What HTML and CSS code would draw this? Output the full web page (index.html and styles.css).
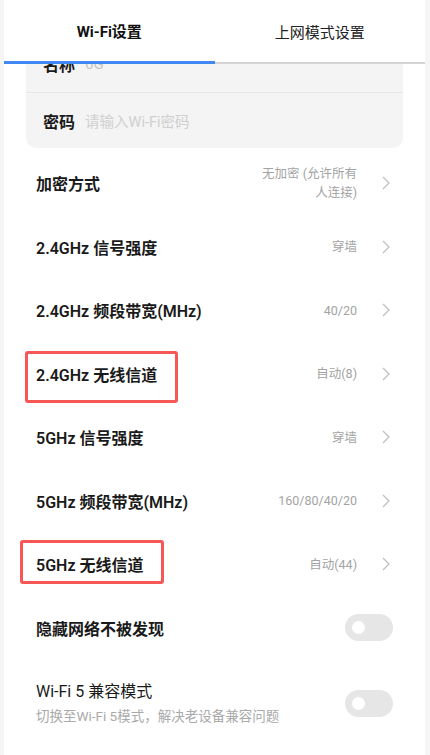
FILE: index.html
```html
<!DOCTYPE html>
<html lang="zh-CN">
<head>
<meta charset="utf-8">
<title>Wi-Fi设置</title>
<link rel="stylesheet" href="styles.css">
</head>
<body>
<div class="panel">
  <div class="tabs">
    <div class="tab active">Wi-Fi设置</div>
    <div class="tab">上网模式设置</div>
  </div>
  <div class="content">
    <div class="card">
      <div class="card-row"><span class="card-label">名称</span><span class="card-value">6G</span></div>
      <div class="card-row"><span class="card-label">密码</span><span class="card-ph">请输入Wi-Fi密码</span></div>
    </div>
    <div class="list">
      <div class="row">
        <span class="label">加密方式</span>
        <span class="value">无加密 (允许所有人连接)</span>
        <svg class="chev" width="8" height="14" viewBox="0 0 8 14"><path d="M1 1 L7 7 L1 13" fill="none" stroke="#bdbdbd" stroke-width="1.2"/></svg>
      </div>
      <div class="row">
        <span class="label">2.4GHz 信号强度</span>
        <span class="value">穿墙</span>
        <svg class="chev" width="8" height="14" viewBox="0 0 8 14"><path d="M1 1 L7 7 L1 13" fill="none" stroke="#bdbdbd" stroke-width="1.2"/></svg>
      </div>
      <div class="row">
        <span class="label">2.4GHz 频段带宽(MHz)</span>
        <span class="value">40/20</span>
        <svg class="chev" width="8" height="14" viewBox="0 0 8 14"><path d="M1 1 L7 7 L1 13" fill="none" stroke="#bdbdbd" stroke-width="1.2"/></svg>
      </div>
      <div class="row">
        <span class="mark mark-a"></span>
        <span class="label">2.4GHz 无线信道</span>
        <span class="value">自动(8)</span>
        <svg class="chev" width="8" height="14" viewBox="0 0 8 14"><path d="M1 1 L7 7 L1 13" fill="none" stroke="#bdbdbd" stroke-width="1.2"/></svg>
      </div>
      <div class="row">
        <span class="label">5GHz 信号强度</span>
        <span class="value">穿墙</span>
        <svg class="chev" width="8" height="14" viewBox="0 0 8 14"><path d="M1 1 L7 7 L1 13" fill="none" stroke="#bdbdbd" stroke-width="1.2"/></svg>
      </div>
      <div class="row">
        <span class="label">5GHz 频段带宽(MHz)</span>
        <span class="value">160/80/40/20</span>
        <svg class="chev" width="8" height="14" viewBox="0 0 8 14"><path d="M1 1 L7 7 L1 13" fill="none" stroke="#bdbdbd" stroke-width="1.2"/></svg>
      </div>
      <div class="row">
        <span class="mark mark-b"></span>
        <span class="label">5GHz 无线信道</span>
        <span class="value">自动(44)</span>
        <svg class="chev" width="8" height="14" viewBox="0 0 8 14"><path d="M1 1 L7 7 L1 13" fill="none" stroke="#bdbdbd" stroke-width="1.2"/></svg>
      </div>
      <div class="row">
        <span class="label">隐藏网络不被发现</span>
        <span class="toggle"><span class="knob"></span></span>
      </div>
      <div class="row row-tall">
        <div class="label-block">
          <div class="title">Wi-Fi 5 兼容模式</div>
          <div class="sub">切换至Wi-Fi 5模式，解决老设备兼容问题</div>
        </div>
        <span class="toggle"><span class="knob"></span></span>
      </div>
    </div>
  </div>
</div>
</body>
</html>
```

FILE: styles.css
```css
html, body {
  margin: 0;
  padding: 0;
}
body {
  background: #f5f5f5;
  font-family: Roboto, "Noto Sans CJK SC", sans-serif;
  color: #1a1a1a;
}
.panel {
  margin-left: 4px;
  width: 421px;
  height: 755px;
  background: #fff;
  display: flex;
  flex-direction: column;
  overflow: hidden;
}
.tabs {
  display: flex;
  flex: none;
  height: 64px;
}
.tab {
  flex: 1;
  display: flex;
  align-items: center;
  justify-content: center;
  font-size: 15px;
  color: #222;
  border-bottom: 2px solid #d4d4d4;
}
.tab.active {
  font-weight: 700;
  color: #111;
  border-bottom: 3px solid #3f87f3;
}
.content {
  flex: 1;
  overflow: hidden;
}
.card {
  margin: -28px 22px 0;
  background: #f4f4f4;
  border-radius: 10px;
}
.card-row {
  height: 56px;
  display: flex;
  align-items: center;
  padding: 0 17px;
  gap: 10px;
}
.card-row + .card-row {
  border-top: 1px solid #e6e6e6;
  height: 55px;
}
.card-label {
  font-size: 16px;
  font-weight: 600;
  color: #1a1a1a;
}
.card-value {
  font-size: 15px;
  color: #c4c4c4;
}
.card-ph {
  font-size: 14.5px;
  color: #cfcfcf;
}
.list {
  margin-top: 3.25px;
}
.row {
  position: relative;
  height: 63.5px;
  display: flex;
  align-items: center;
  padding: 0 32px;
}
.label {
  flex: 1;
  font-size: 16px;
  font-weight: 600;
  color: #1a1a1a;
}
.value {
  font-size: 12.5px;
  line-height: 19px;
  color: #a3a3a3;
  text-align: right;
  max-width: 98px;
}
.chev {
  flex: none;
  margin-left: 25px;
  margin-right: 3px;
}
.mark {
  position: absolute;
  border: 3px solid #f75757;
  border-radius: 3px;
  box-sizing: border-box;
}
.mark-a {
  left: 21px;
  top: 8.75px;
  width: 153px;
  height: 52px;
}
.mark-b {
  left: 16px;
  top: 7.75px;
  width: 144px;
  height: 44px;
}
.toggle {
  flex: none;
  width: 48px;
  height: 27px;
  border-radius: 14px;
  background: #e6e6e6;
  display: flex;
  align-items: center;
  padding-left: 7px;
  box-sizing: border-box;
}
.knob {
  width: 13px;
  height: 13px;
  border-radius: 50%;
  background: #fff;
}
.row-tall {
  height: auto;
  padding-top: 22px;
  padding-bottom: 19px;
}
.label-block {
  flex: 1;
}
.title {
  font-size: 16px;
  line-height: 22px;
  color: #1a1a1a;
}
.sub {
  margin-top: 4px;
  font-size: 13.5px;
  line-height: 18px;
  color: #aaa;
}
.row-tall .toggle {
  align-self: center;
}
```
